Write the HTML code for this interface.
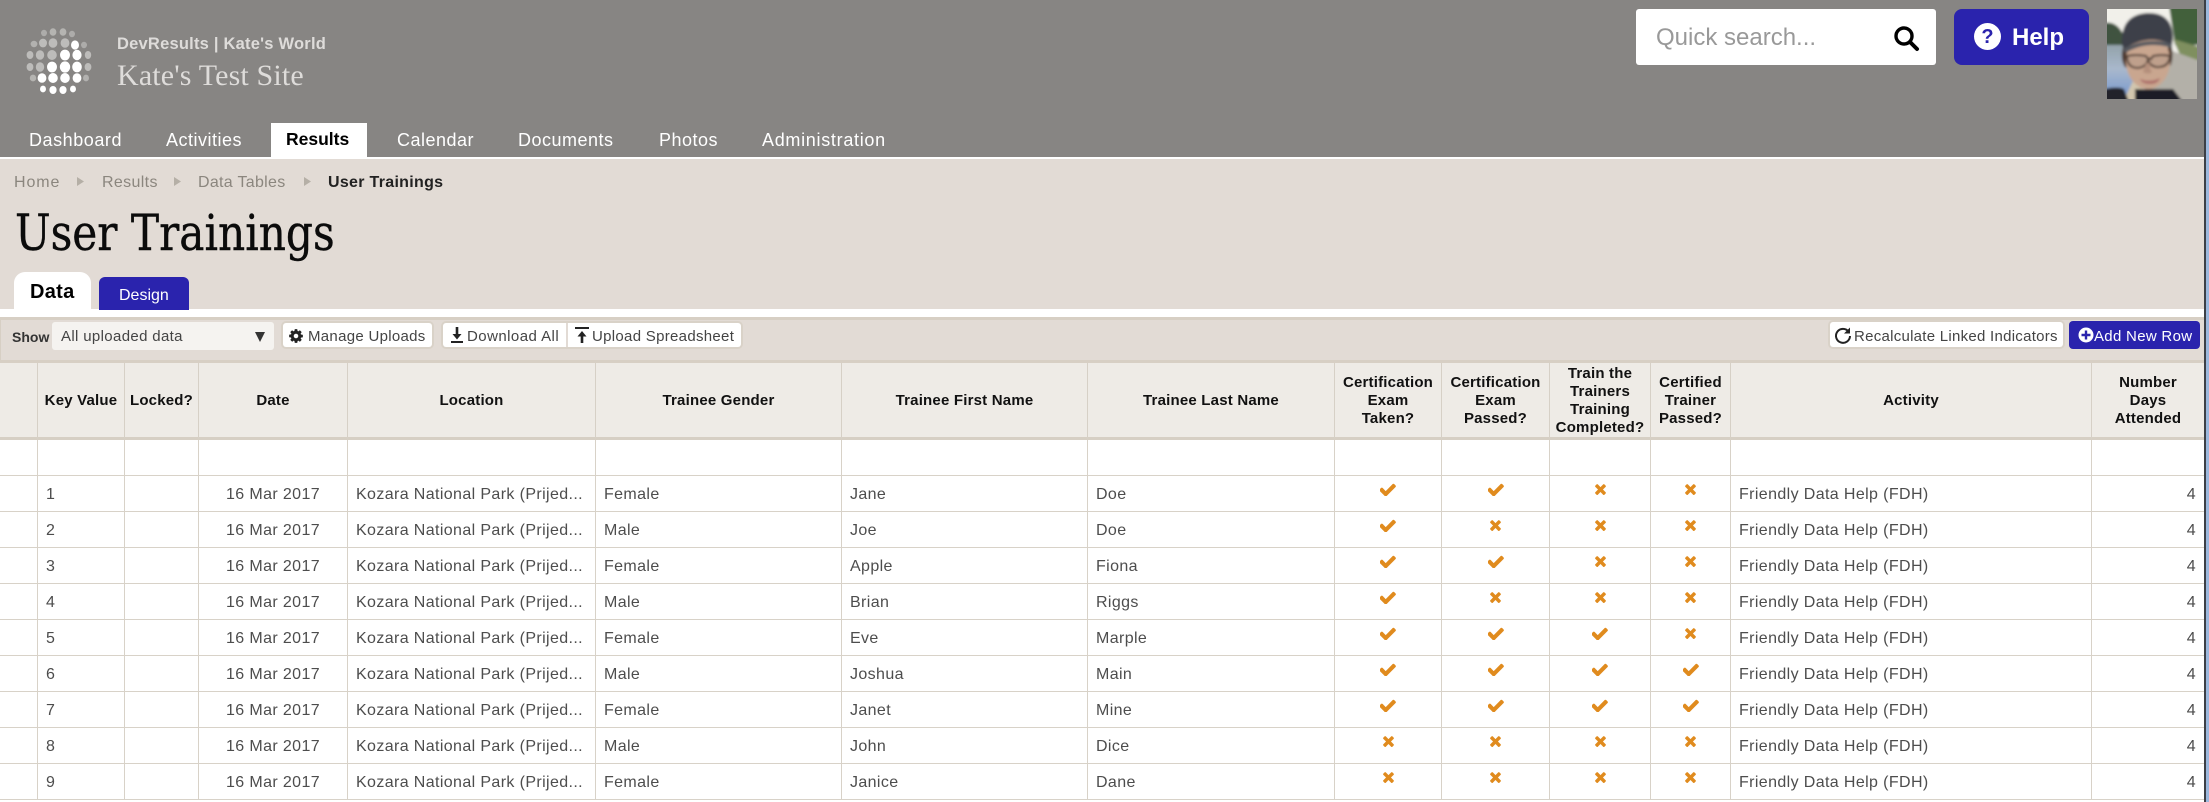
<!DOCTYPE html>
<html><head><meta charset="utf-8"><title>User Trainings</title>
<style>
html,body{margin:0;padding:0;width:2209px;height:802px;overflow:hidden;background:#fff;font-family:"Liberation Sans",sans-serif}
.a{position:absolute}
.t{position:absolute;white-space:nowrap;line-height:1}
.nav{font-size:18px;color:#fff;top:131px;letter-spacing:.5px}
.bc{font-size:16px;color:#8b867e;top:175px;letter-spacing:.35px}
.tb{font-size:15px;color:#444;top:329px;letter-spacing:.22px}
.btn{position:absolute;background:#fff;border-radius:3px;box-shadow:0 0 0 2px #d9d2c8}
table{position:absolute;left:0;top:363px;width:2204px;table-layout:fixed;border-collapse:separate;border-spacing:0;font-size:16px;letter-spacing:.38px;color:#4d4d4d}
th{height:72px;padding:2px 0 0;background:#eeebe6;border-left:1px solid #d6d0c6;border-bottom:3px solid #d6cfc4;font-size:15px;line-height:18px;color:#111;text-align:center;vertical-align:middle;letter-spacing:.2px;box-sizing:content-box;white-space:nowrap}
td{height:35px;padding:2px 0 0;border-left:1px solid #d8d2c8;border-bottom:1px solid #d8d2c8;white-space:nowrap;vertical-align:middle;box-sizing:border-box;overflow:hidden}
tr{height:36px}
th:first-child,td:first-child{border-left:0}
.l{padding-left:8px}.c{text-align:center}.r{text-align:right;padding-right:8px}
.i{padding-top:0;padding-bottom:8px;line-height:0}
.ck{width:16px;height:13px;fill:#e08b1e;display:inline-block}
.xx{width:11px;height:11px;fill:#e08b1e;display:inline-block}
</style></head>
<body>
<svg width="0" height="0" style="position:absolute">
<symbol id="k" viewBox="180 270 1500 1200" preserveAspectRatio="none"><path d="M1671 566q0 40-28 68l-724 724-136 136q-28 28-68 28t-68-28l-136-136-362-362q-28-28-28-68t28-68l136-136q28-28 68-28t68 28l294 295 656-657q28-28 68-28t68 28l136 136q28 28 28 68z"/></symbol>
<symbol id="x" viewBox="100 350 1210 1210" preserveAspectRatio="none"><path d="M1298 1322q0 40-28 68l-136 136q-28 28-68 28t-68-28l-294-294-294 294q-28 28-68 28t-68-28l-136-136q-28-28-28-68t28-68l294-294-294-294q-28-28-28-68t28-68l136-136q28-28 68-28t68 28l294 294 294-294q28-28 68-28t68 28l136 136q28 28 28 68t-28 68l-294 294 294 294q28 28 28 68z"/></symbol>
</svg>

<!-- header -->
<div class="a" style="left:0;top:0;width:2204px;height:157px;background:#878583"></div>
<div class="a" style="left:0;top:159px;width:2204px;height:150px;background:#e2dbd5"></div>

<!-- globe logo -->
<svg class="a" style="left:20px;top:24px" width="80" height="76" viewBox="20 24 80 76">
<g fill="#bdbcba">
<ellipse cx="44" cy="33" rx="3" ry="3.200" opacity=".7"/><ellipse cx="53" cy="32" rx="3.400" ry="3.800" opacity=".85"/><ellipse cx="63" cy="32" rx="3.400" ry="3.800" opacity=".85"/><ellipse cx="72" cy="34" rx="3" ry="3.200" opacity=".7"/>
<ellipse cx="34" cy="44" rx="3.400" ry="3.200" opacity=".8"/><ellipse cx="43" cy="43" rx="4" ry="4.400"/><ellipse cx="53" cy="43" rx="4.400" ry="4.800"/><ellipse cx="65" cy="43" rx="4.400" ry="4.800"/><ellipse cx="84" cy="45" rx="3" ry="3.200" opacity=".7"/>
<ellipse cx="30" cy="55" rx="3.400" ry="4"/><ellipse cx="40" cy="55" rx="4.200" ry="4.800"/><ellipse cx="52" cy="55" rx="4.800" ry="5"/><ellipse cx="88" cy="55" rx="3.200" ry="4"/>
<ellipse cx="30" cy="67" rx="3.400" ry="4"/><ellipse cx="40" cy="67" rx="4.200" ry="4.800"/><ellipse cx="88" cy="67" rx="3.400" ry="4"/>
<ellipse cx="33" cy="78" rx="3.200" ry="3.400" opacity=".85"/><ellipse cx="86" cy="78" rx="3" ry="3.400" opacity=".8"/>
</g>
<g fill="#fff">
<ellipse cx="75" cy="45" rx="4" ry="4.600"/><ellipse cx="65" cy="55" rx="5" ry="5.400"/><ellipse cx="77" cy="55" rx="4.600" ry="5.200"/>
<ellipse cx="52" cy="67" rx="5" ry="5.400"/><ellipse cx="65" cy="67" rx="5.200" ry="5.600"/><ellipse cx="77" cy="67" rx="4.800" ry="5.400"/>
<ellipse cx="42" cy="78" rx="4.400" ry="4.800"/><ellipse cx="53" cy="78" rx="4.800" ry="5"/><ellipse cx="65" cy="78" rx="4.800" ry="5"/><ellipse cx="77" cy="78" rx="4.400" ry="4.800"/>
<ellipse cx="43" cy="89" rx="3" ry="3.400"/><ellipse cx="53" cy="90" rx="3.600" ry="4"/><ellipse cx="63" cy="90" rx="3.600" ry="4"/><ellipse cx="73" cy="89" rx="3" ry="3.400"/>
</g>
</svg>
<div class="t" style="left:117px;top:36px;font-size:16.5px;font-weight:bold;color:#dedcda;letter-spacing:.22px">DevResults | Kate's World</div>
<div class="t" style="left:117px;top:61px;font-size:30px;font-family:'Liberation Serif',serif;color:#dedcda;letter-spacing:.15px">Kate's Test Site</div>

<!-- search / help / avatar -->
<div class="a" style="left:1636px;top:9px;width:300px;height:56px;background:#fff;border-radius:3px"></div>
<div class="t" style="left:1656px;top:26px;font-size:24px;color:#999">Quick search...</div>
<svg class="a" style="left:1892px;top:25px" width="28" height="27" viewBox="0 0 28 27"><circle cx="12" cy="11" r="8" fill="none" stroke="#000" stroke-width="3.400"/><path d="M18 17l7 7" stroke="#000" stroke-width="4" stroke-linecap="round"/></svg>
<div class="a" style="left:1954px;top:9px;width:135px;height:56px;background:#2a23ad;border-radius:8px"></div>
<div class="a" style="left:1974px;top:23px;width:27px;height:27px;background:#fff;border-radius:50%"></div>
<div class="t" style="left:1974px;top:27px;width:27px;text-align:center;font-size:20px;font-weight:bold;color:#2a23ad">?</div>
<div class="t" style="left:2012px;top:26px;font-size:24px;font-weight:bold;color:#fff">Help</div>
<svg class="a" style="left:2107px;top:9px" width="90" height="90" viewBox="0 0 90 90">
<defs><filter id="b" x="-5%" y="-5%" width="110%" height="110%"><feGaussianBlur stdDeviation="1.300"/></filter><linearGradient id="w" x1="0" y1="0" x2="0" y2="1"><stop offset="0" stop-color="#8a9a9c"/><stop offset=".5" stop-color="#a9b8cc"/><stop offset="1" stop-color="#6f93cf"/></linearGradient><clipPath id="cp"><rect width="90" height="90"/></clipPath></defs>
<g clip-path="url(#cp)"><g filter="url(#b)">
<rect x="-3" y="-3" width="96" height="96" fill="#f1f0ea"/>
<rect x="-3" y="27" width="30" height="66" fill="url(#w)"/>
<path d="M-3 14q10-2 16 6l5 8v8H-3z" fill="#3f5340"/>
<path d="M62 -3H93V36H68z" fill="#42603a"/>
<path d="M66 30l27 8v16l-20-8z" fill="#7f8f5e"/>
<path d="M60 40l33 12v41H30z" fill="#b3b0a8"/>
<path d="M16 93L26 72H36V93z" fill="#d2c6ae"/>
<path d="M-3 80q14-3 20 0l5 13H-3z" fill="#20242c"/>
<path d="M28 93V80h38l10 13z" fill="#1d1f26"/>
<path d="M16 38q-3 12 2 20l6 3-1-25z" fill="#4d382d"/>
<path d="M64 34q3 12 0 22l-4 2 1-26z" fill="#4d382d"/>
<ellipse cx="41" cy="52" rx="22" ry="28" fill="#c9a68f"/>
<path d="M15 36Q13 6 40 4q25-1 26 24l-1 8Q42 24 17 40z" fill="#3c4049"/>
<path d="M16 40Q40 27 65 35l0 4Q40 31 18 44z" fill="#55585f"/>
<path d="M20 47q9-2 19 0l2 3q2-1 3 0l2-3q9-2 17 0-1 12-14 11-6-1-8-7-2 7-10 8-11 0-11-12z" fill="#bfa08c" stroke="#4f3e34" stroke-width="2"/>
<path d="M33 70q10 4 20-1-2 6-10 6t-10-5z" fill="#ad6f6a"/>
<path d="M39 54q-2 6-3 9 6 3 9 0-3-4-2-9z" fill="#b48f7b"/>
</g></g></svg>

<!-- nav -->
<div class="a" style="left:271px;top:123px;width:96px;height:34px;background:#fff"></div>
<div class="t nav" style="left:29px;letter-spacing:.55px">Dashboard</div>
<div class="t nav" style="left:166px">Activities</div>
<div class="t nav" style="left:286px;color:#000;font-weight:bold;letter-spacing:0;font-size:17.5px">Results</div>
<div class="t nav" style="left:397px">Calendar</div>
<div class="t nav" style="left:518px">Documents</div>
<div class="t nav" style="left:659px">Photos</div>
<div class="t nav" style="left:762px;letter-spacing:.7px">Administration</div>

<!-- breadcrumb -->
<div class="t bc" style="left:14px;letter-spacing:.9px">Home</div>
<div class="t bc" style="left:102px">Results</div>
<div class="t bc" style="left:198px;letter-spacing:.3px">Data Tables</div>
<div class="t bc" style="left:328px;color:#222;font-weight:bold;letter-spacing:.3px">User Trainings</div>
<svg class="a" style="left:0;top:170px" width="320" height="22"><g fill="#b5afa6"><path d="M77 7l7 4.500-7 4.500z"/><path d="M174 7l7 4.500-7 4.500z"/><path d="M304 7l7 4.500-7 4.500z"/></g></svg>

<!-- title -->
<div class="t" style="left:15px;top:203px;font-family:'DejaVu Serif',serif;font-size:50px;line-height:60px;color:#0b0b0b;transform:scaleX(.845);transform-origin:0 0;-webkit-text-stroke:.4px #0b0b0b">User Trainings</div>

<!-- tabs -->
<div class="a" style="left:14px;top:272px;width:77px;height:37px;background:#fff;border-radius:11px 11px 0 0"></div>
<div class="t" style="left:30px;top:282px;font-size:20px;font-weight:bold;color:#000;letter-spacing:.3px">Data</div>
<div class="a" style="left:99px;top:277px;width:90px;height:33px;background:#2a23ad;border-radius:6px 6px 0 0"></div>
<div class="t" style="left:119px;top:288px;font-size:16px;color:#fff">Design</div>

<!-- toolbar -->
<div class="a" style="left:0;top:317px;width:2204px;height:46px;box-sizing:border-box;background:#e2dbd5;border:solid #d7cfc4;border-width:3px 0 3px 1px"></div>
<div class="t" style="left:12px;top:330px;font-size:14px;font-weight:bold;color:#333">Show</div>
<div class="a" style="left:52px;top:322px;width:222px;height:28px;background:#f5f3f0;border-radius:3px"></div>
<div class="t tb" style="left:61px;letter-spacing:.35px;color:#444">All uploaded data</div>
<svg class="a" style="left:255px;top:332px" width="10" height="10"><path d="M0 0h10L5 10z" fill="#333"/></svg>

<div class="btn" style="left:283px;top:323px;width:149px;height:24px"></div>
<svg class="a" style="left:288px;top:328px" width="16" height="16" viewBox="0 0 1792 1792"><path fill="#222" d="M1152 896q0-106-75-181t-181-75-181 75-75 181 75 181 181 75 181-75 75-181zm512-109v222q0 12-8 23t-20 13l-185 28q-19 54-39 91 35 50 107 138 10 12 10 25t-9 23q-27 37-99 108t-94 71q-12 0-26-9l-138-108q-44 23-91 38-16 136-29 186-7 28-36 28h-222q-14 0-24.500-8.500t-11.500-21.500l-28-184q-49-16-90-37l-141 107q-10 9-25 9-14 0-25-11-126-114-165-168-7-10-7-23 0-12 8-23 15-21 51-66.500t54-70.500q-27-50-41-99l-183-27q-13-2-21-12.500t-8-23.500v-222q0-12 8-23t19-13l186-28q14-46 39-92-40-57-107-138-10-12-10-24 0-10 9-23 26-36 98.500-107.500t94.500-71.500q13 0 26 10l138 107q44-23 91-38 16-136 29-186 7-28 36-28h222q14 0 24.500 8.500t11.500 21.500l28 184q49 16 90 37l142-107q9-9 24-9 13 0 25 10 129 119 165 170 7 8 7 22 0 12-8 23-15 21-51 66.500t-54 70.500q26 50 41 98l183 28q13 2 21 12.500t8 23.500z"/></svg>
<div class="t tb" style="left:308px;letter-spacing:.3px">Manage Uploads</div>

<div class="btn" style="left:443px;top:323px;width:298px;height:24px"></div>
<div class="a" style="left:566px;top:323px;width:2px;height:24px;background:#e2dbd5"></div>
<svg class="a" style="left:450px;top:326px" width="14" height="18"><path d="M7 1v9" stroke="#222" stroke-width="2.600"/><path d="M2.500 8h9L7 13.500z" fill="#222"/><path d="M1 16h12" stroke="#222" stroke-width="2"/></svg>
<div class="t tb" style="left:467px;letter-spacing:.45px">Download All</div>
<svg class="a" style="left:575px;top:326px" width="14" height="18"><path d="M0 2h14" stroke="#222" stroke-width="2"/><path d="M7 17V9" stroke="#222" stroke-width="2.600"/><path d="M2.500 10.500h9L7 5z" fill="#222"/></svg>
<div class="t tb" style="left:592px;letter-spacing:.3px">Upload Spreadsheet</div>

<div class="btn" style="left:1830px;top:322px;width:233px;height:25px"></div>
<svg class="a" style="left:1834px;top:327px" width="18" height="18" viewBox="0 0 18 18"><path d="M14.500 4.500A7 7 0 1 0 16 9" fill="none" stroke="#222" stroke-width="2"/><path d="M16 0.500v6h-6z" fill="#222"/></svg>
<div class="t tb" style="left:1854px;letter-spacing:.27px">Recalculate Linked Indicators</div>

<div class="a" style="left:2069px;top:321px;width:131px;height:28px;background:#2a23ad;border-radius:4px"></div>
<svg class="a" style="left:2078px;top:327px" width="16" height="16"><circle cx="8" cy="8" r="7.500" fill="#fff"/><path d="M8 3.500v9M3.500 8h9" stroke="#2a23ad" stroke-width="2.400"/></svg>
<div class="t tb" style="left:2094px;color:#fff;letter-spacing:.3px">Add New Row</div>

<!-- table -->
<table>
<colgroup><col style="width:37px"><col style="width:87px"><col style="width:74px"><col style="width:149px"><col style="width:248px"><col style="width:246px"><col style="width:246px"><col style="width:247px"><col style="width:107px"><col style="width:108px"><col style="width:101px"><col style="width:80px"><col style="width:361px"><col style="width:113px"></colgroup>
<thead><tr><th></th><th>Key Value</th><th>Locked?</th><th>Date</th><th>Location</th><th>Trainee Gender</th><th>Trainee First Name</th><th>Trainee Last Name</th><th>Certification<br>Exam<br>Taken?</th><th>Certification<br>Exam<br>Passed?</th><th>Train the<br>Trainers<br>Training<br>Completed?</th><th>Certified<br>Trainer<br>Passed?</th><th>Activity</th><th>Number<br>Days<br>Attended</th></tr></thead>
<tbody>
<tr><td style="height:36px"></td><td></td><td></td><td></td><td></td><td></td><td></td><td></td><td></td><td></td><td></td><td></td><td></td><td></td></tr>
<tr><td></td><td class="l">1</td><td></td><td class="c">16 Mar 2017</td><td class="l">Kozara National Park (Prijed...</td><td class="l">Female</td><td class="l">Jane</td><td class="l">Doe</td><td class="c i"><svg class="ck"><use href="#k"/></svg></td><td class="c i"><svg class="ck"><use href="#k"/></svg></td><td class="c i"><svg class="xx"><use href="#x"/></svg></td><td class="c i"><svg class="xx"><use href="#x"/></svg></td><td class="l">Friendly Data Help (FDH)</td><td class="r">4</td></tr>
<tr><td></td><td class="l">2</td><td></td><td class="c">16 Mar 2017</td><td class="l">Kozara National Park (Prijed...</td><td class="l">Male</td><td class="l">Joe</td><td class="l">Doe</td><td class="c i"><svg class="ck"><use href="#k"/></svg></td><td class="c i"><svg class="xx"><use href="#x"/></svg></td><td class="c i"><svg class="xx"><use href="#x"/></svg></td><td class="c i"><svg class="xx"><use href="#x"/></svg></td><td class="l">Friendly Data Help (FDH)</td><td class="r">4</td></tr>
<tr><td></td><td class="l">3</td><td></td><td class="c">16 Mar 2017</td><td class="l">Kozara National Park (Prijed...</td><td class="l">Female</td><td class="l">Apple</td><td class="l">Fiona</td><td class="c i"><svg class="ck"><use href="#k"/></svg></td><td class="c i"><svg class="ck"><use href="#k"/></svg></td><td class="c i"><svg class="xx"><use href="#x"/></svg></td><td class="c i"><svg class="xx"><use href="#x"/></svg></td><td class="l">Friendly Data Help (FDH)</td><td class="r">4</td></tr>
<tr><td></td><td class="l">4</td><td></td><td class="c">16 Mar 2017</td><td class="l">Kozara National Park (Prijed...</td><td class="l">Male</td><td class="l">Brian</td><td class="l">Riggs</td><td class="c i"><svg class="ck"><use href="#k"/></svg></td><td class="c i"><svg class="xx"><use href="#x"/></svg></td><td class="c i"><svg class="xx"><use href="#x"/></svg></td><td class="c i"><svg class="xx"><use href="#x"/></svg></td><td class="l">Friendly Data Help (FDH)</td><td class="r">4</td></tr>
<tr><td></td><td class="l">5</td><td></td><td class="c">16 Mar 2017</td><td class="l">Kozara National Park (Prijed...</td><td class="l">Female</td><td class="l">Eve</td><td class="l">Marple</td><td class="c i"><svg class="ck"><use href="#k"/></svg></td><td class="c i"><svg class="ck"><use href="#k"/></svg></td><td class="c i"><svg class="ck"><use href="#k"/></svg></td><td class="c i"><svg class="xx"><use href="#x"/></svg></td><td class="l">Friendly Data Help (FDH)</td><td class="r">4</td></tr>
<tr><td></td><td class="l">6</td><td></td><td class="c">16 Mar 2017</td><td class="l">Kozara National Park (Prijed...</td><td class="l">Male</td><td class="l">Joshua</td><td class="l">Main</td><td class="c i"><svg class="ck"><use href="#k"/></svg></td><td class="c i"><svg class="ck"><use href="#k"/></svg></td><td class="c i"><svg class="ck"><use href="#k"/></svg></td><td class="c i"><svg class="ck"><use href="#k"/></svg></td><td class="l">Friendly Data Help (FDH)</td><td class="r">4</td></tr>
<tr><td></td><td class="l">7</td><td></td><td class="c">16 Mar 2017</td><td class="l">Kozara National Park (Prijed...</td><td class="l">Female</td><td class="l">Janet</td><td class="l">Mine</td><td class="c i"><svg class="ck"><use href="#k"/></svg></td><td class="c i"><svg class="ck"><use href="#k"/></svg></td><td class="c i"><svg class="ck"><use href="#k"/></svg></td><td class="c i"><svg class="ck"><use href="#k"/></svg></td><td class="l">Friendly Data Help (FDH)</td><td class="r">4</td></tr>
<tr><td></td><td class="l">8</td><td></td><td class="c">16 Mar 2017</td><td class="l">Kozara National Park (Prijed...</td><td class="l">Male</td><td class="l">John</td><td class="l">Dice</td><td class="c i"><svg class="xx"><use href="#x"/></svg></td><td class="c i"><svg class="xx"><use href="#x"/></svg></td><td class="c i"><svg class="xx"><use href="#x"/></svg></td><td class="c i"><svg class="xx"><use href="#x"/></svg></td><td class="l">Friendly Data Help (FDH)</td><td class="r">4</td></tr>
<tr><td></td><td class="l">9</td><td></td><td class="c">16 Mar 2017</td><td class="l">Kozara National Park (Prijed...</td><td class="l">Female</td><td class="l">Janice</td><td class="l">Dane</td><td class="c i"><svg class="xx"><use href="#x"/></svg></td><td class="c i"><svg class="xx"><use href="#x"/></svg></td><td class="c i"><svg class="xx"><use href="#x"/></svg></td><td class="c i"><svg class="xx"><use href="#x"/></svg></td><td class="l">Friendly Data Help (FDH)</td><td class="r">4</td></tr>
</tbody></table>

<!-- window frame -->
<div class="a" style="left:2204px;top:0;width:2px;height:802px;background:#3c3f46"></div>
<div class="a" style="left:2206px;top:0;width:3px;height:802px;background:#9cb8dd"></div>
</body></html>
